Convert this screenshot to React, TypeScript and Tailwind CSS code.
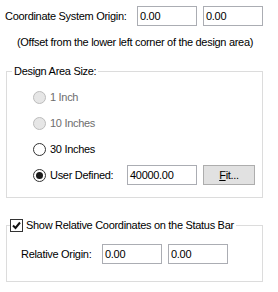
import React from "react";

function TextBox({ value, width = "w-[60px]" }: { value: string; width?: string }) {
  return (
    <div className={`${width} h-[20px] border border-[#abadb3] bg-white px-[2px] flex items-center leading-none`}>
      {value}
    </div>
  );
}

function Radio({ checked, disabled }: { checked?: boolean; disabled?: boolean }) {
  return (
    <span
      className={`w-[13px] h-[13px] rounded-full border flex items-center justify-center shrink-0 ${
        disabled ? "border-[#bcbcbc] bg-[#e6e6e6]" : "border-[#333333] bg-white"
      }`}
    >
      {checked && <span className="w-[7px] h-[7px] rounded-full bg-[#1b1b1b]" />}
    </span>
  );
}

const sizes = [
  { label: "1 Inch", disabled: true },
  { label: "10 Inches", disabled: true },
  { label: "30 Inches" },
];

export default function App() {
  return (
    <div className="w-[278px] h-[292px] bg-white text-black text-[11px] leading-[14px] tracking-[-0.3px] font-['Liberation_Sans',Arial,sans-serif] overflow-hidden whitespace-nowrap">
      {/* Origin */}
      <div className="flex items-center pt-[6px] pl-[5px]">
        <span className="w-[132px]">Coordinate System Origin:</span>
        <TextBox value="0.00" />
        <div className="w-[6px]" />
        <TextBox value="0.00" />
      </div>
      <div className="pl-[17px] mt-[9px]">(Offset from the lower left corner of the design area)</div>

      {/* Design area size */}
      <fieldset className="ml-[6px] w-[257px] mt-[15px] border border-[#dcdcdc] pl-[5px] pt-[6px] pb-[9px]">
        <legend className="px-[2px]">Design Area Size:</legend>
        {sizes.map((s) => (
          <div key={s.label} className="h-[26px] pl-[21px] flex items-center gap-[4px]">
            <Radio disabled={s.disabled} />
            <span className={s.disabled ? "text-[#6d6d6d]" : ""}>{s.label}</span>
          </div>
        ))}
        <div className="h-[26px] pl-[21px] flex items-center">
          <Radio checked />
          <span className="ml-[4px] w-[77px]">User Defined:</span>
          <TextBox value="40000.00" width="w-[70px]" />
          <button className="ml-[6px] w-[52px] h-[20px] border border-[#adadad] bg-[#e1e1e1] flex items-center justify-center leading-none">
            <span>
              <span className="underline">F</span>it...
            </span>
          </button>
        </div>
      </fieldset>

      {/* Relative coordinates */}
      <fieldset className="ml-[6px] w-[257px] mt-[20px] border border-[#dcdcdc] pl-[3px] pt-[12px] pb-[17px]">
        <legend className="pr-[2px] flex items-center gap-[3px]">
          <span className="w-[13px] h-[13px] border border-[#333333] bg-white flex items-center justify-center">
            <svg width="11" height="11" viewBox="0 0 11 11">
              <path d="M2 5.5 L4.5 8 L9 2.5" fill="none" stroke="#111" strokeWidth="2" />
            </svg>
          </span>
          <span>Show Relative Coordinates on the Status Bar</span>
        </legend>
        <div className="pl-[11px] flex items-center">
          <span className="w-[81px]">Relative Origin:</span>
          <TextBox value="0.00" />
          <div className="w-[6px]" />
          <TextBox value="0.00" />
        </div>
      </fieldset>
    </div>
  );
}
